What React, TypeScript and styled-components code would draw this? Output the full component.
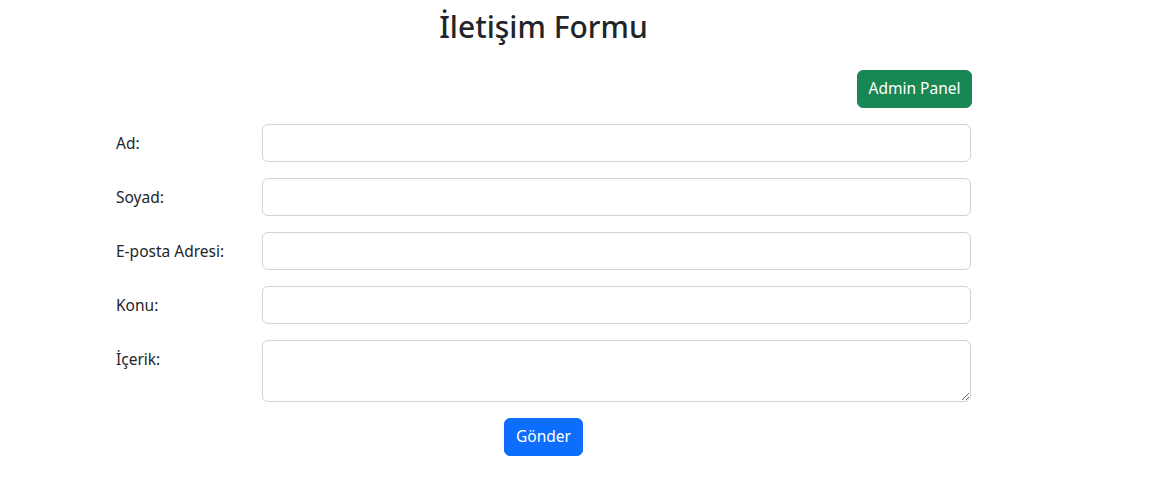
import React from "react";
import styled, { createGlobalStyle } from "styled-components";

const Global = createGlobalStyle`
  * { box-sizing: border-box; }
  body {
    margin: 0;
    background: #fff;
    color: #212529;
    font-family: "Noto Sans", "Open Sans", sans-serif;
    font-size: 16px;
    line-height: 1.5;
  }
`;

const Page = styled.div`
  width: 879px;
  margin-left: 104px;
  padding-top: 8px;
`;

const Title = styled.h2`
  margin: 0 0 8px;
  text-align: center;
  font-size: 30px;
  font-weight: 500;
  line-height: 38px;
`;

const TopBar = styled.div`
  display: flex;
  justify-content: flex-end;
  padding: 16px 11px 16px;
`;

const Button = styled.button<{ $variant: "success" | "primary"; $w: number }>`
  font-family: inherit;
  font-size: 15.5px;
  line-height: 1.5;
  width: ${(p) => p.$w}px;
  height: 38px;
  padding: 0;
  border-radius: 6px;
  border: 1px solid ${(p) => (p.$variant === "success" ? "#198754" : "#0d6efd")};
  background: ${(p) => (p.$variant === "success" ? "#198754" : "#0d6efd")};
  color: #fff;
  cursor: pointer;
  white-space: nowrap;
`;

const Form = styled.form`
  display: flex;
  flex-direction: column;
`;

const Row = styled.div`
  display: flex;
  margin-bottom: 16px;
`;

const Label = styled.label`
  flex: 0 0 146px;
  padding: 7px 12px 0;
  font-size: 15.5px;
  line-height: 24px;
`;

const Field = styled.div`
  flex: 1;
  padding: 0 12px;
`;

const Input = styled.input`
  display: block;
  width: 100%;
  height: 38px;
  padding: 6px 12px;
  font-family: inherit;
  font-size: 16px;
  border: 1px solid #ced4da;
  border-radius: 6px;
  background: #fff;
  color: #212529;
  outline: none;
`;

const TextArea = styled.textarea`
  display: block;
  width: 100%;
  height: 62px;
  padding: 6px 12px;
  font-family: inherit;
  font-size: 16px;
  line-height: 1.5;
  border: 1px solid #ced4da;
  border-radius: 6px;
  background: #fff;
  color: #212529;
  outline: none;
  resize: vertical;
`;

const Submit = styled.div`
  display: flex;
  justify-content: center;
`;

const fields = [
  { id: "ad", label: "Ad:" },
  { id: "soyad", label: "Soyad:" },
  { id: "email", label: "E-posta Adresi:" },
  { id: "konu", label: "Konu:" },
];

export default function App() {
  return (
    <>
      <Global />
      <Page>
        <Title>İletişim Formu</Title>
        <TopBar>
          <Button $variant="success" $w={115} type="button">Admin Panel</Button>
        </TopBar>
        <Form onSubmit={(e) => e.preventDefault()}>
          {fields.map((f) => (
            <Row key={f.id}>
              <Label htmlFor={f.id}>{f.label}</Label>
              <Field>
                <Input id={f.id} type="text" />
              </Field>
            </Row>
          ))}
          <Row>
            <Label htmlFor="icerik">İçerik:</Label>
            <Field>
              <TextArea id="icerik" rows={2} />
            </Field>
          </Row>
          <Submit>
            <Button $variant="primary" $w={79} type="submit">Gönder</Button>
          </Submit>
        </Form>
      </Page>
    </>
  );
}
